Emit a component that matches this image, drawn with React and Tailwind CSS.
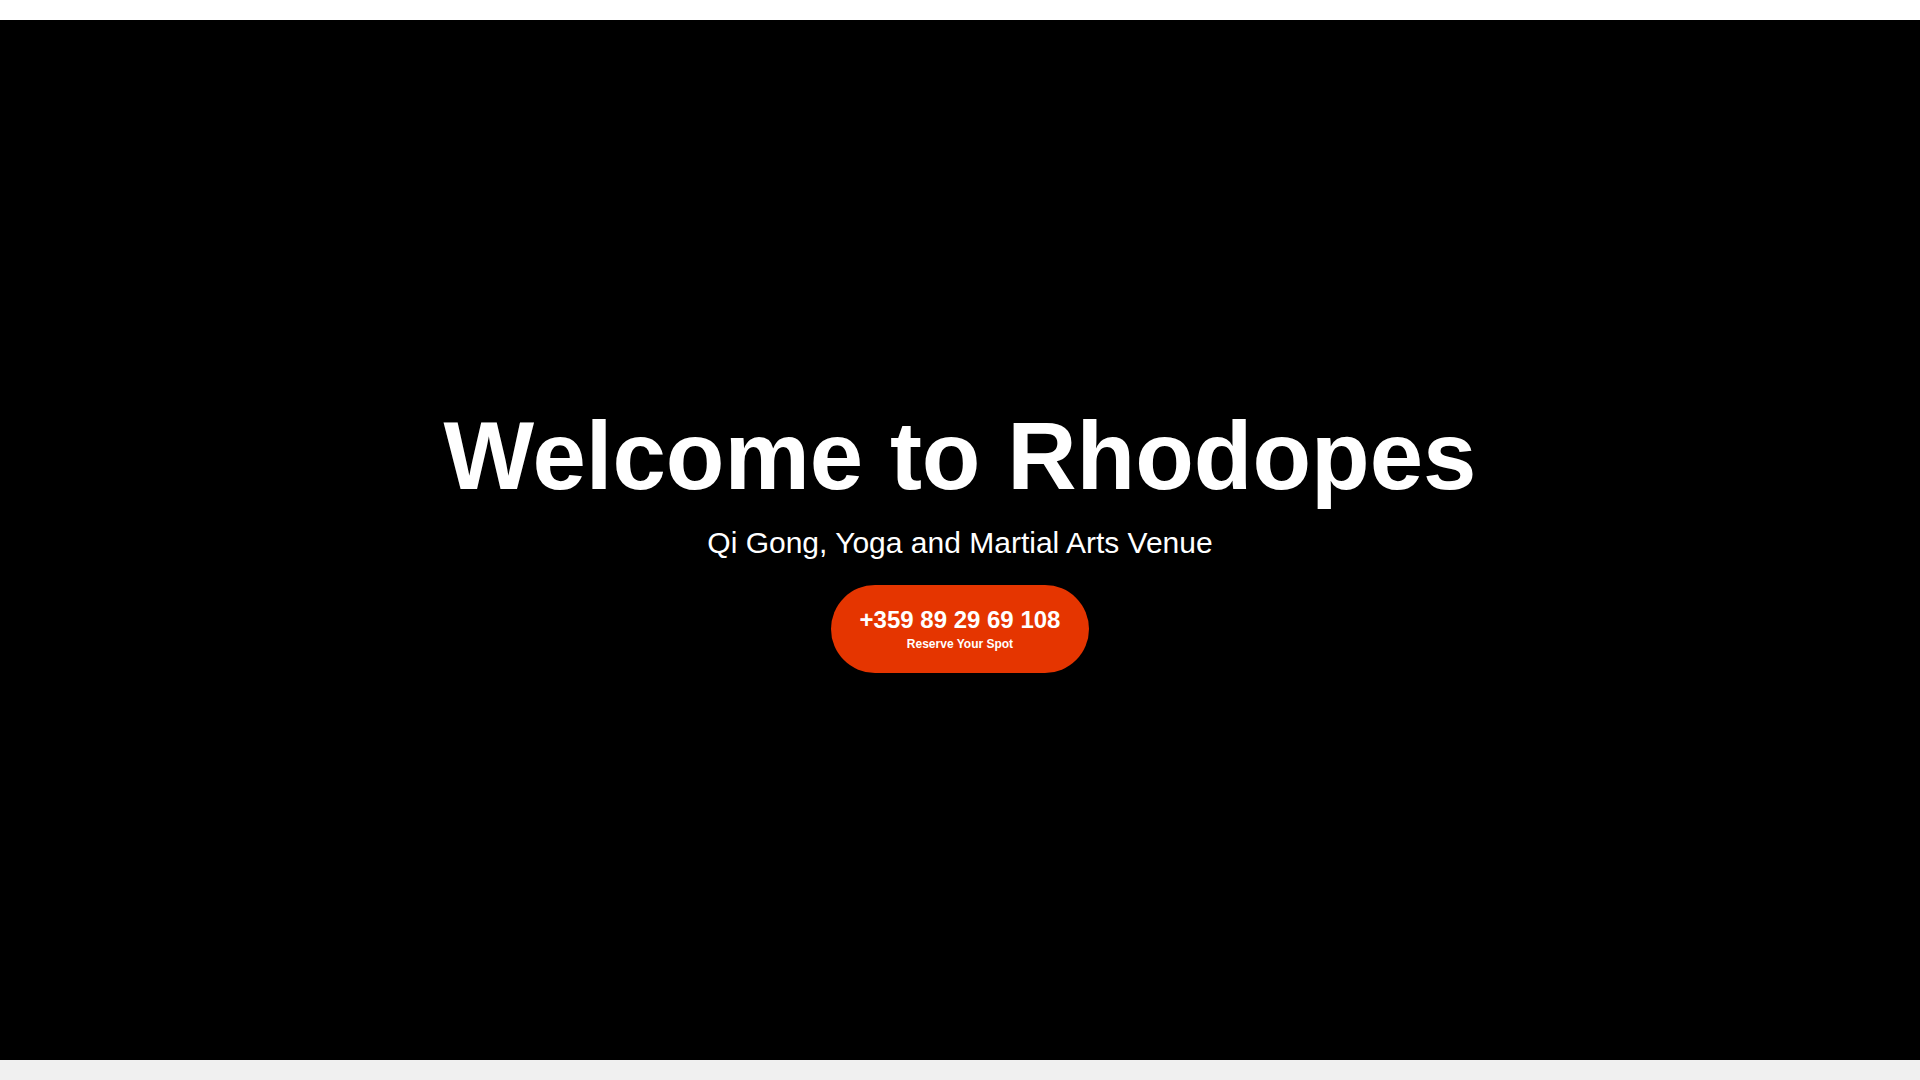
export default function App() {
  return (
    <div className="w-full min-h-screen bg-[#f0f0f0] flex flex-col" style={{ fontFamily: '"Liberation Sans", Arial, sans-serif' }}>
      <div className="h-[20px] bg-white" />
      <section className="h-[1040px] bg-black flex flex-col items-center justify-center pb-[9px] text-white">
        <h1 className="text-[96px] leading-[1.2] font-bold whitespace-nowrap">Welcome to Rhodopes</h1>
        <p className="mt-[11px] text-[30px] leading-[1.2] whitespace-nowrap">Qi Gong, Yoga and Martial Arts Venue</p>
        <a href="#" className="mt-[24px] flex flex-col items-center rounded-full bg-[#e53500] px-[29px] pt-[21px] pb-[21px] whitespace-nowrap">
          <span className="text-[24px] leading-[1.2] font-bold">+359 89 29 69 108</span>
          <span className="mt-[3px] text-[12px] leading-[1.2] font-bold">Reserve Your Spot</span>
        </a>
      </section>
      <div className="h-[20px] bg-[#f0f0f0]" />
    </div>
  );
}
